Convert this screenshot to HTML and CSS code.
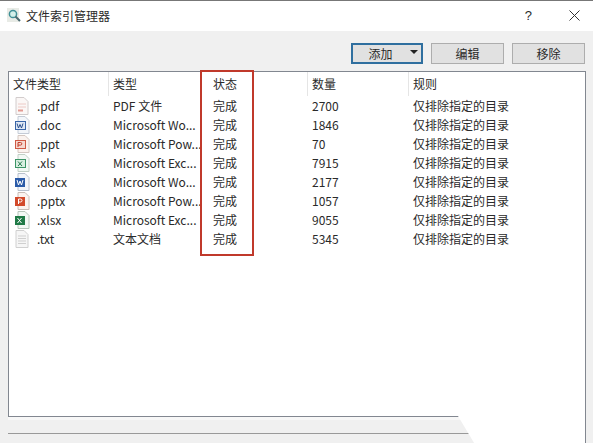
FILE: index.html
```html
<!DOCTYPE html>
<html lang="zh-CN">
<head>
  <meta charset="UTF-8">
  <meta name="viewport" content="width=device-width, initial-scale=1.0">
  <title>文件索引管理器</title>
  <link rel="stylesheet" href="styles.css">
</head>
<body>
<div class="dialog">
  <!-- Title bar -->
  <div class="titlebar">
    <svg class="app-icon" viewBox="0 0 14 14" width="14" height="14">
      <rect x="0" y="0" width="12" height="14" fill="#e8ebe6"/>
      <circle cx="6" cy="6" r="3.600" fill="#d4f0ea" stroke="#3f8f96" stroke-width="1.500"/>
      <path d="M8.500 8.500l4.500 4.500" stroke="#4a6a70" stroke-width="2"/>
    </svg>
    <span class="title">文件索引管理器</span>
    <span class="help">?</span>
    <svg class="close" viewBox="0 0 11 11" width="11" height="11">
      <path d="M.5 .5l10 10M10.500 .5l-10 10" stroke="#333" stroke-width="1" fill="none"/>
    </svg>
  </div>

  <!-- Toolbar -->
  <div class="toolbar">
    <button class="btn btn-add">添加<span class="caret"></span></button>
    <button class="btn">编辑</button>
    <button class="btn">移除</button>
  </div>

  <!-- List -->
  <div class="list">
    <div class="row head">
      <div class="cell">文件类型</div>
      <div class="cell no-sep">类型</div>
      <div class="cell">状态</div>
      <div class="cell">数量</div>
      <div class="cell">规则</div>
    </div>
    <div class="row">
      <div class="cell ext">
        <svg class="ficon" viewBox="0 0 16 18"><path d="M2 .5h8l4 4v13H2z" fill="#fbf7f6" stroke="#d2cccc"/><path d="M4 7h8M4 10h8" stroke="#eccac6"/><path d="M4 13.500h5" stroke="#e39a92" stroke-width="2"/></svg>
        .pdf
      </div>
      <div class="cell">PDF 文件</div><div class="cell">完成</div><div class="cell">2700</div><div class="cell">仅排除指定的目录</div>
    </div>
    <div class="row">
      <div class="cell ext">
        <svg class="ficon" viewBox="0 0 16 18"><path d="M4 .5h7l4 4v13H4z" fill="#f3f6fa" stroke="#c4cbd6"/><rect x="1.500" y="5.500" width="10" height="8" fill="#dfe8f5" stroke="#3a66a8"/><path d="M3 7.500l1.500 4.500L6 8.500 7.500 12 9 7.500" stroke="#2a4f8c" fill="none"/></svg>
        .doc
      </div>
      <div class="cell">Microsoft Wo...</div><div class="cell">完成</div><div class="cell">1846</div><div class="cell">仅排除指定的目录</div>
    </div>
    <div class="row">
      <div class="cell ext">
        <svg class="ficon" viewBox="0 0 16 18"><path d="M4 .5h7l4 4v13H4z" fill="#fbf3ef" stroke="#d4c8c2"/><rect x="1.500" y="5.500" width="10" height="8" fill="#f6d9d0" stroke="#cf5a45"/><path d="M4 12V7.500h2.500a1.300 1.300 0 010 2.600H4" stroke="#c23d2a" fill="none"/></svg>
        .ppt
      </div>
      <div class="cell">Microsoft Pow...</div><div class="cell">完成</div><div class="cell">70</div><div class="cell">仅排除指定的目录</div>
    </div>
    <div class="row">
      <div class="cell ext">
        <svg class="ficon" viewBox="0 0 16 18"><path d="M4 .5h7l4 4v13H4z" fill="#f2f8f4" stroke="#c2d0c6"/><rect x="1.500" y="5.500" width="10" height="8" fill="#d8eee0" stroke="#3c9466"/><path d="M4 7.500l4 4.500M8 7.500L4 12" stroke="#237a4c" fill="none"/></svg>
        .xls
      </div>
      <div class="cell">Microsoft Exc...</div><div class="cell">完成</div><div class="cell">7915</div><div class="cell">仅排除指定的目录</div>
    </div>
    <div class="row">
      <div class="cell ext">
        <svg class="ficon" viewBox="0 0 16 18"><path d="M4 .5h7l4 4v13H4z" fill="#f3f6fa" stroke="#b8c0cc"/><rect x="1" y="5" width="10" height="9" fill="#2a5ba8"/><path d="M3 7l1.500 5L6 8l1.500 4L9 7" stroke="#fff" fill="none"/></svg>
        .docx
      </div>
      <div class="cell">Microsoft Wo...</div><div class="cell">完成</div><div class="cell">2177</div><div class="cell">仅排除指定的目录</div>
    </div>
    <div class="row">
      <div class="cell ext">
        <svg class="ficon" viewBox="0 0 16 18"><path d="M4 .5h7l4 4v13H4z" fill="#fbf3ef" stroke="#c8bcb6"/><rect x="1" y="5" width="10" height="9" fill="#d2492a"/><path d="M4.500 12V7h2a1.500 1.500 0 010 3h-2" stroke="#fff" fill="none"/></svg>
        .pptx
      </div>
      <div class="cell">Microsoft Pow...</div><div class="cell">完成</div><div class="cell">1057</div><div class="cell">仅排除指定的目录</div>
    </div>
    <div class="row">
      <div class="cell ext">
        <svg class="ficon" viewBox="0 0 16 18"><path d="M4 .5h7l4 4v13H4z" fill="#f2f8f4" stroke="#b6c6bb"/><rect x="1" y="5" width="10" height="9" fill="#1f7a46"/><path d="M3.500 7l4 5M7.500 7l-4 5" stroke="#fff" fill="none"/></svg>
        .xlsx
      </div>
      <div class="cell">Microsoft Exc...</div><div class="cell">完成</div><div class="cell">9055</div><div class="cell">仅排除指定的目录</div>
    </div>
    <div class="row">
      <div class="cell ext">
        <svg class="ficon" viewBox="0 0 16 18"><path d="M2 .5h8l4 4v13H2z" fill="#f6f6f6" stroke="#d0d0d0"/><path d="M4 6h8M4 8.500h8M4 11h8M4 13.500h8" stroke="#cfcfcf"/></svg>
        .txt
      </div>
      <div class="cell">文本文档</div><div class="cell">完成</div><div class="cell">5345</div><div class="cell">仅排除指定的目录</div>
    </div>
  </div>

  <div class="statusbar"></div>

  <!-- Annotation and watermark that sit over the screenshot -->
  <div class="highlight"></div>
  <div class="smudge"></div>
</div>
</body>
</html>
```

FILE: styles.css
```css
* { box-sizing: border-box; }

body {
  margin: 0;
  overflow: hidden;
  font-family: "Noto Sans CJK SC", "Liberation Sans", sans-serif;
  font-size: 12px;
  color: #2a2a2a;
}

.dialog {
  position: relative;
  width: 593px;
  height: 443px;
  background: #f0f0f0;
  border-top: 1px solid #777;
  overflow: hidden;
}

.titlebar {
  display: flex;
  align-items: center;
  height: 30px;
  padding: 0 13px 2px 7px;
  background: #fff;
}
.app-icon { margin-right: 5px; }
.title { flex: 1; font-size: 12px; }
.help { margin-right: 37px; font-family: "Liberation Sans", sans-serif; font-size: 13px; }

.toolbar {
  display: flex;
  justify-content: flex-end;
  gap: 8px;
  padding: 12px 8px 0 0;
  height: 40px;
}

.btn {
  width: 73px;
  height: 21px;
  padding: 0;
  border: 1px solid #adadad;
  background: #e1e1e1;
  color: #2a2a2a;
  font: inherit;
  line-height: 18px;
}
.btn-add {
  display: flex;
  align-items: center;
  justify-content: center;
  position: relative;
  width: 72px;
  padding-right: 13px;
  border: 2px solid #2f6f9f;
}
.caret {
  position: absolute;
  right: 3px;
  top: 5px;
  border: 4px solid transparent;
  border-top: 4px solid #222;
  border-bottom: 0;
}

.list {
  margin: 0 7px 0 8px;
  height: 346px;
  background: #fff;
  border: 1px solid #828790;
  box-shadow: 0 3px 0 #f7f7f7;
}

.row {
  display: grid;
  grid-template-columns: 100px 100px 99px 101px 1fr;
  height: 19px;
  line-height: 19px;
  white-space: nowrap;
}
.row.head {
  height: 24px;
  line-height: 24px;
}
.row.head .cell { border-right: 1px solid #e5e5e5; }
.row.head .cell:last-child,
.row.head .cell.no-sep { border-right: 0; }

.cell {
  padding-left: 4px;
  overflow: hidden;
}
.cell.ext {
  display: flex;
  align-items: center;
  padding-left: 5px;
  gap: 7px;
}
.ficon { width: 16px; height: 18px; flex: none; }

.statusbar {
  margin: 16px 7px 0 8px;
  border-top: 1px solid #999;
}

.highlight {
  position: absolute;
  left: 200px;
  top: 69px;
  width: 54px;
  height: 186px;
  border: 2px solid #c0392b;
}

.smudge {
  position: absolute;
  left: 458px;
  top: 415px;
  width: 128px;
  height: 30px;
  background: #fff;
  border-right: 1px solid #828790;
  clip-path: polygon(0 0, 100% 0, 100% 100%, 14% 100%);
}
```
